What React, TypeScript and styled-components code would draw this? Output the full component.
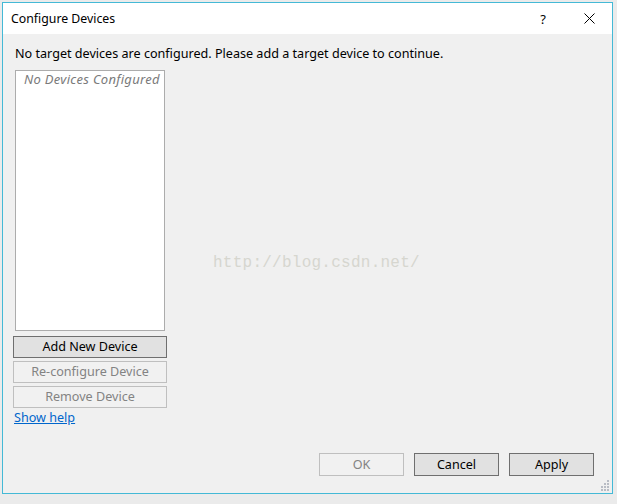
import React from 'react';
import styled, { createGlobalStyle } from 'styled-components';

const GlobalStyle = createGlobalStyle`
  html, body {
    margin: 0;
    padding: 0;
    background: #e9e9e9;
  }
  body {
    font-family: "Noto Sans", "Liberation Sans", sans-serif;
    font-size: 12.6px;
    color: #000;
  }
`;

const Screen = styled.div`
  width: 617px;
  height: 504px;
  padding: 2px 0 0 2px;
  box-sizing: border-box;
  overflow: hidden;
  background: #ebebeb;
`;

const Dialog = styled.div`
  position: relative;
  width: 611px;
  height: 492px;
  box-sizing: border-box;
  border: 1px solid #44b9d6;
  background: #f0f0f0;
  display: flex;
  flex-direction: column;
`;

const TitleBar = styled.div`
  height: 31px;
  background: #fff;
  display: flex;
  align-items: center;
  padding-left: 8px;
`;

const Title = styled.div`
  flex: 1;
  font-size: 12.3px;
  line-height: 16px;
`;

const TitleButton = styled.div<{ w: number }>`
  width: ${(p) => p.w}px;
  height: 31px;
  display: flex;
  align-items: center;
  justify-content: center;
  font-size: 13px;
`;

const Body = styled.div`
  flex: 1;
  display: flex;
  flex-direction: column;
  padding: 12px 18px 17px 10px;
`;

const Message = styled.div`
  line-height: 16px;
  padding-left: 2px;
`;

const LeftColumn = styled.div`
  width: 154px;
  margin-top: 8px;
  display: flex;
  flex-direction: column;
`;

const DeviceList = styled.div`
  height: 261px;
  box-sizing: border-box;
  margin: 0 2px 5px 2px;
  background: #fff;
  border: 1px solid #acacac;
  padding: 0 0 0 8px;
  font-style: italic;
  font-size: 13px;
  letter-spacing: 0.3px;
  color: #7a7a7a;
  line-height: 16px;
  white-space: nowrap;
`;

const Button = styled.button<{ $disabled?: boolean }>`
  height: 22px;
  box-sizing: border-box;
  padding: 0;
  font-family: inherit;
  font-size: 12.6px;
  line-height: 16px;
  background: ${(p) => (p.$disabled ? '#f1f1f1' : '#e1e1e1')};
  border: 1px solid ${(p) => (p.$disabled ? '#bfbfbf' : '#6f6f6f')};
  color: ${(p) => (p.$disabled ? '#838383' : '#000')};
`;

const SideButton = styled(Button)`
  width: 154px;
  margin-bottom: 3px;
`;

const HelpLink = styled.a`
  color: #0066cc;
  text-decoration: underline;
  margin: -1px 0 0 1px;
  line-height: 16px;
  cursor: pointer;
`;

const Footer = styled.div`
  margin-top: auto;
  display: flex;
  justify-content: flex-end;
  gap: 10px;
`;

const FooterButton = styled(Button)`
  width: 85px;
  height: 23px;
`;

const Watermark = styled.div`
  position: absolute;
  left: 210px;
  top: 251px;
  font-family: "Liberation Mono", monospace;
  font-size: 16px;
  letter-spacing: 0.25px;
  color: #d6d6cf;
  pointer-events: none;
`;

const Grip = styled.svg`
  position: absolute;
  right: 2px;
  bottom: 2px;
`;

export default function App() {
  return (
    <>
      <GlobalStyle />
      <Screen>
        <Dialog>
          <TitleBar>
            <Title>Configure Devices</Title>
            <TitleButton w={46}>?</TitleButton>
            <TitleButton w={46}>
              <svg width="11" height="11" viewBox="0 0 11 11">
                <path d="M0.5 0.5 L10.5 10.5 M10.5 0.5 L0.5 10.5" stroke="#000" strokeWidth="1" />
              </svg>
            </TitleButton>
          </TitleBar>
          <Body>
            <Message>
              No target devices are configured. Please add a target device to continue.
            </Message>
            <LeftColumn>
              <DeviceList>No Devices Configured</DeviceList>
              <SideButton>Add New Device</SideButton>
              <SideButton $disabled>Re-configure Device</SideButton>
              <SideButton $disabled>Remove Device</SideButton>
              <HelpLink>Show help</HelpLink>
            </LeftColumn>
            <Footer>
              <FooterButton $disabled>OK</FooterButton>
              <FooterButton>Cancel</FooterButton>
              <FooterButton>Apply</FooterButton>
            </Footer>
          </Body>
          <Watermark>http://blog.csdn.net/</Watermark>
          <Grip width="11" height="11" viewBox="0 0 11 11">
            {[
              [8, 0], [8, 3], [5, 3], [8, 6], [5, 6], [2, 6], [8, 9], [5, 9], [2, 9],
            ].map(([x, y]) => (
              <rect key={`${x}-${y}`} x={x} y={y} width="2" height="2" fill="#b8bcc4" />
            ))}
          </Grip>
        </Dialog>
      </Screen>
    </>
  );
}
